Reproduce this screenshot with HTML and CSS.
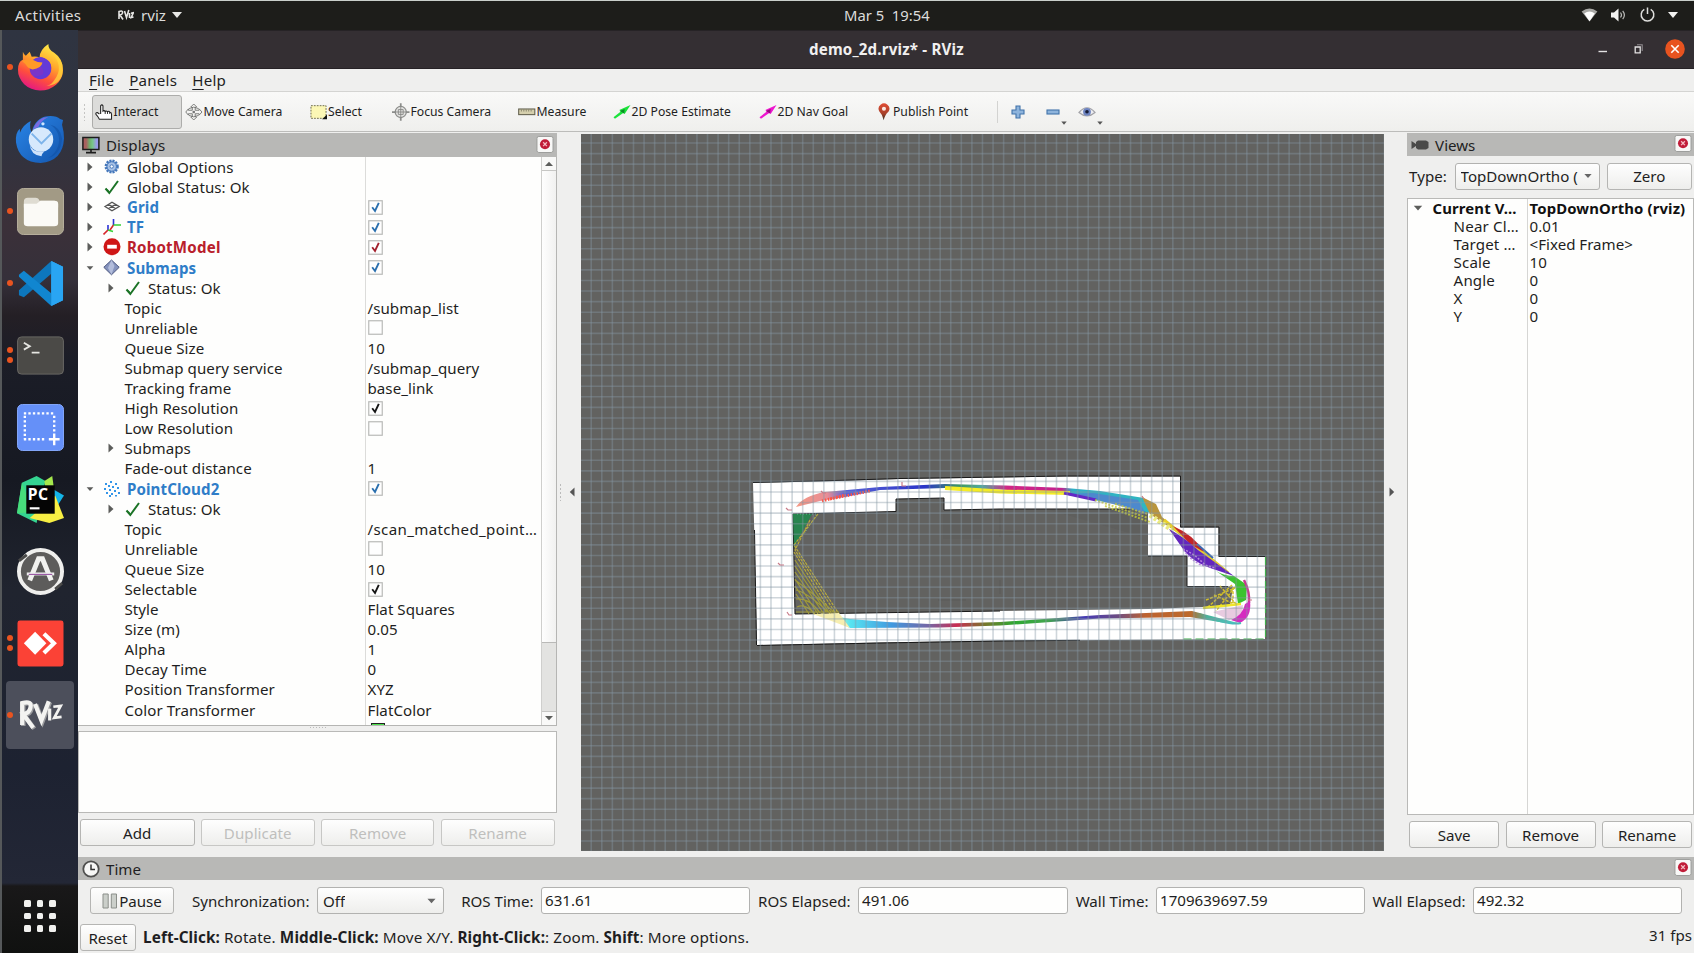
FILE: index.html
```html
<!DOCTYPE html>
<html lang="en">
<head>
<meta charset="utf-8">
<title>demo_2d.rviz* - RViz</title>
<link rel="stylesheet" href="styles.css">
</head>
<body>
<svg class="defs" width="0" height="0" aria-hidden="true">
  <defs>
    <symbol id="tri" viewBox="0 0 8 10"><path d="M1.500 .5v9l5-4.500z" fill="#5c5d5b"/></symbol>
    <symbol id="tri-down" viewBox="0 0 10 8"><path d="M.8 1.800h8.400L5 6.500z" fill="#5c5d5b"/></symbol>
    <symbol id="ok" viewBox="0 0 18 18"><path d="M2.500 10.500 6.300 15 15 3" fill="none" stroke="#1b7326" stroke-width="2"/><path d="M2.500 10 5.500 12l1 3.500z" fill="#1b7326"/></symbol>
    <symbol id="check" viewBox="0 0 15 15"><rect x=".75" y=".75" width="13.500" height="13.500" fill="#fefefe" stroke="#b9bab8" stroke-width="1.200"/></symbol>
    <symbol id="mark" viewBox="0 0 15 15"><path d="M4.200 7.300 7 11l3.800-8.200" fill="none" stroke="currentColor" stroke-width="1.900"/></symbol>
    <symbol id="close" viewBox="0 0 18 18"><rect x=".5" y=".5" width="17" height="17" rx="2" fill="#f8f8f7" stroke="#999a98"/><circle cx="9" cy="8.700" r="5.300" fill="#c01c38"/><path d="m7 6.700 4 4m0-4-4 4" stroke="#f3b8c0" stroke-width="1.400"/></symbol>
  </defs>
</svg>

<header class="topbar">
  <span class="activities">Activities</span>
  <svg class="rviz-mini" viewBox="0 0 16 12"><g fill="none" stroke="#e6e6e4" stroke-width="1.600"><path d="M1 10V2.500Q5 1 4.500 4 4.300 5.500 2 6l3 4.500M6.500 2l2 6.500L10.800 1M11.500 4v5M13 4.200l2.400-.6L13.200 8.500l2.300-.6"/></g></svg>
  <span class="app-name">rviz</span>
  <svg class="caret" viewBox="0 0 10 6"><path d="M0 0h10L5 6z" fill="#e8e8e6"/></svg>
  <span class="clock">Mar 5&nbsp; 19:54</span>
  <div class="sys">
    <svg width="17" height="14" viewBox="0 0 17 14"><path d="M.6 3.600Q8.500-2.700 16.400 3.600L8.500 13.600z" fill="#a9a9a6"/><path d="M3.200 5.400q5.300-4 10.600 0L8.500 13.300z" fill="#fff"/></svg>
    <svg width="16" height="14" viewBox="0 0 16 14"><path d="M0 4.500h3L7.500.5v13L3 9.500H0z" fill="#f2f2f0"/><path d="M9.500 4.500q2 2.500 0 5M11.700 2.800q3.400 4.200 0 8.400" fill="none" stroke="#b9b9b7" stroke-width="1.200"/></svg>
    <svg width="15" height="15" viewBox="0 0 15 15"><path d="M4.300 2.300a6.300 6.300 0 1 0 6.400 0M7.500 .5v6.500" fill="none" stroke="#dededc" stroke-width="1.500"/></svg>
    <svg width="10" height="6" viewBox="0 0 10 6"><path d="M0 0h10L5 6z" fill="#f2f2f0"/></svg>
  </div>
</header>

<div class="desktop">
<nav class="dock">
  <div class="slot"><i class="dots one"></i>
    <svg viewBox="0 0 48 48"><defs><linearGradient id="fx" x1=".75" y1="0" x2=".3" y2="1"><stop offset="0" stop-color="#fff14a"/><stop offset=".4" stop-color="#ffa62b"/><stop offset=".7" stop-color="#ff4f3c"/><stop offset="1" stop-color="#e31587"/></linearGradient></defs><path d="M6 8q1 3 3 4l4-4 2 5q5-1 8 1 0-8 9-14 0 6 6 9 9 6 9 18A23 21 0 0 1 1 26Q1 18 6 16z" fill="url(#fx)"/><circle cx="24" cy="25" r="11" fill="#7a35c9"/><path d="M15 17q9-8 18 1 4 5 0 13-8 8-15 2 12 0 8-8-3-5-11-8z" fill="#643ad8"/><path d="M5 17q8-3 11-1 5 3 10 3-1 6-10 7-5-1-7-5z" fill="#ff9a28"/><path d="M35 9q14 14 3 28-2 4-8 6 20-2 16-23-3-8-11-11z" fill="#ffd53c" opacity=".75"/></svg></div>
  <div class="slot">
    <svg viewBox="0 0 48 48"><defs><linearGradient id="tb" x1="0" y1="0" x2="1" y2="1"><stop offset="0" stop-color="#2a86e8"/><stop offset="1" stop-color="#1456ae"/></linearGradient></defs><path d="M16 13Q21 0 34 0q7 0 10 3l3 1-1 5q2 7 2 14-1 23-24 25Q2 47-1 27q-1-10 4-14l0 4Q6 9 14 5q-2 7 2 14z" fill="url(#tb)"/><path d="M16 14Q21 1 32 1q-8 4-10 10z" fill="#7a6be0"/><path d="M34 9q12 8 8 22-3 8-10 12 13-4 14-20-2-12-12-14z" fill="#0f4da0" opacity=".5"/><circle cx="24.500" cy="24" r="12.500" fill="#d7e9fc"/><path d="m15 18 10 10 10-10" fill="none" stroke="#7db4ea" stroke-width="2"/><path d="M13 29q3 9 15 7-3 3-3 5-11-1-12-12z" fill="#cfe2fa"/><circle cx="26.500" cy="8" r="1.700" fill="#cfe6ff"/></svg></div>
  <div class="slot"><i class="dots one"></i>
    <svg viewBox="0 0 48 48"><rect x=".5" y=".5" width="47" height="47" rx="6" fill="#a29a85" stroke="#b7b09d"/><path d="M7 14q0-4 4-4h8q3 0 4 3h15q4 0 4 3v4H7z" fill="#dfdcd2"/><path d="M7 16h13l4-3h14q4 0 4 3v20q0 3-4 3H11q-4 0-4-3z" fill="#fbfaf6"/></svg></div>
  <div class="slot"><i class="dots one"></i>
    <svg viewBox="0 0 48 48"><path d="M35 1 47 7v34L35 47z" fill="#29a5f3"/><path d="M35 1 2 31v5l5 2 28-24z" fill="#0d77bd"/><path d="m2 15 5-4 28 23v13L2 17z" fill="#1186d0"/><path d="M35 1 47 7v34L35 47z" fill="#29a5f3"/></svg></div>
  <div class="slot"><i class="dots one up"></i><i class="dots one down"></i>
    <svg viewBox="0 0 48 48"><rect x=".6" y="5" width="46.800" height="38" rx="4" fill="#4b4a47" stroke="#696864"/><path d="m7 11 6 3.500L7 18M15 21h8" fill="none" stroke="#e6e6e2" stroke-width="1.900"/></svg></div>
  <div class="slot">
    <svg viewBox="0 0 48 48"><rect x=".5" y=".5" width="47" height="47" rx="5" fill="#6590f8" stroke="#84a7fb"/><path d="M7 9.500h31M8 12v24M38 12v18M7 36h23" fill="none" stroke="#fff" stroke-width="2.400" stroke-dasharray="2.400 2.200"/><path d="M38 30v12M32.500 36h11" stroke="#fff" stroke-width="2.400"/></svg></div>
  <div class="slot">
    <svg viewBox="0 0 48 48"><path d="M5 7 20 0 29 5 20 48 0 38z" fill="#35d491"/><path d="m0 38 5-31 12 30z" fill="#47dd7b"/><path d="M28 5l8-5 2 15-8 6z" fill="#a5e84d"/><path d="M36 13 48 20 41 31z" fill="#14b5e8"/><path d="M39 20 48 43 33 48 13 43z" fill="#f8ef43"/><rect x="9.500" y="9.500" width="29" height="29" fill="#050505"/><path d="M13 33h10" stroke="#fff" stroke-width="2.200"/><text x="11" y="24" class="pc">PC</text></svg></div>
  <div class="slot">
    <svg viewBox="0 0 48 48"><circle cx="24" cy="24" r="22" fill="#5d5c5b" stroke="#efefed" stroke-width="4"/><path d="m2 13 8-6M39 42l7-6" stroke="#4a4a49" stroke-width="3"/><path d="M13 33 22 11h4l9 22" fill="none" stroke="#f1f1ef" stroke-width="5"/><path d="M10 26.500h28" stroke="#eee" stroke-width="3"/><path d="M12 27h24" stroke="#9b5aa5" stroke-width="1.200"/></svg></div>
  <div class="slot"><i class="dots one up"></i><i class="dots one down"></i>
    <svg viewBox="0 0 48 48"><rect x=".5" y=".5" width="47" height="47" rx="2.500" fill="#fb4236"/><path d="M18.500 12 30 23.800 18.500 35.500 7 23.800z" fill="#fff"/><path d="m27.500 14 10.200 9.800-10.200 9.800" fill="none" stroke="#fff" stroke-width="4.300"/></svg></div>
  <div class="slot active"><i class="dots one"></i>
    <svg viewBox="0 0 48 48"><g fill="none" stroke="#9a9b9e" stroke-width="5" transform="translate(1.200 1)"><path d="M4 35V11q11-3 9 5-1 6-8 7l11 15M18 12l7 18 8-21"/></g><g fill="none" stroke="#f3f3f1" stroke-width="4.600"><path d="M4 35V11q11-3 9 5-1 6-8 7l11 15M18 12l7 18 8-21"/><path d="M34 17v13" stroke-width="3.500"/><path d="m38 15 8-1-7 13 8-1" stroke-width="3"/></g></svg></div>
  <div class="apps"><i></i><i></i><i></i><i></i><i></i><i></i><i></i><i></i><i></i></div>
</nav>

<main class="window">
  <div class="titlebar"><b class="title">demo_2d.rviz* - RViz</b>
    <div class="winbtns">
      <svg width="10" height="14" viewBox="0 0 10 14"><path d="M.5 9.500h8.500" stroke="#e3e2e3" stroke-width="1.400"/></svg>
      <svg class="restore" width="10" height="12" viewBox="0 0 10 12"><path d="M1.200 4h5v5.800h-5z" fill="none" stroke="#e3e2e3" stroke-width="1.300"/><path d="M3 1.700h5.200V8" fill="none" stroke="#8f8b8f" stroke-width="1.100"/></svg>
      <svg width="20" height="20" viewBox="0 0 20 20"><circle cx="10" cy="10" r="9.800" fill="#e8531f"/><path d="m6.300 6.300 7.400 7.400m0-7.400-7.400 7.400" stroke="#fff" stroke-width="1.600"/></svg>
    </div>
  </div>
  <div class="menubar"><span><u>F</u>ile</span><span><u>P</u>anels</span><span><u>H</u>elp</span></div>
  <div class="toolbar">
    <i class="grip"></i>
    <div class="tool t-interact"><svg viewBox="0 0 18 18"><path d="M5.800 11V2.600q1.300-1.800 2.400 0V8q1-1 2.300.3 1-1 2.300.4 1.500-1 2.500.5 1.500 0 1.700 2v5.300H4.500Q3 13.500 1 11.500.3 9.500 2.500 9.600L4.500 11" fill="#fff" stroke="#222" stroke-width="1.100"/><path d="M10.500 8v3M12.900 8.500v2.500M15.200 9v2" stroke="#222"/></svg><span>Interact</span></div>
    <div class="tool t-move"><svg viewBox="0 0 18 18"><path d="M9 .8l3 3-1.500.4v3h4V5.800l3 3.200-3 3.200v-1.400h-4v3l1.500.4-3 3-3-3 1.500-.4v-3h-4v1.400L.8 9l2.700-3.200v1.400h4v-3L6 3.800zM4 5.500q5-3 10 0M4 12.500q5 3 10 0" fill="none" stroke="#6d6e6c" stroke-width=".9"/><path d="M7.800 7.800h2.400v2.400H7.800z" fill="#777"/></svg><span>Move Camera</span></div>
    <div class="tool t-select"><svg viewBox="0 0 18 18"><rect x="1" y="2.500" width="15.500" height="13" fill="#fbf7b5" stroke="#6c6a4c" stroke-dasharray="1.800 1.200"/><path d="M17.500 11.500v5h-5z" fill="#111"/></svg><span>Select</span></div>
    <div class="tool t-focus"><svg viewBox="0 0 18 18"><path d="M9 0v18M0 9h18" stroke="#8c8d8b" stroke-width="1.800"/><circle cx="9" cy="9" r="5.700" fill="#e4e4e2" stroke="#8c8d8b" stroke-width="1.300"/><path d="M9 3v12M3 9h12M6.500 6.500h5v5h-5z" stroke="#858684" fill="none" stroke-width=".9"/></svg><span>Focus Camera</span></div>
    <div class="tool t-measure"><svg viewBox="0 0 18 18"><rect x=".7" y="5.900" width="16.600" height="5.800" fill="#d5cfad" stroke="#62604f" stroke-width="1.100"/><path d="M3.500 6.500v2m2.500-2v2m2.500-2v2m2.500-2v2m2.500-2v2" stroke="#77745e" stroke-width=".8"/></svg><span>Measure</span></div>
    <div class="tool t-pose"><svg viewBox="0 0 18 18"><path d="M.5 14.500 8 8.500 6.500 7 18 1.800 12 11l-1.500-1L2 16z" fill="#1be33b"/><path d="m7 8 4.500 2.500L12 6z" fill="#0a8d24"/></svg><span>2D Pose Estimate</span></div>
    <div class="tool t-nav"><svg viewBox="0 0 18 18"><path d="M.5 14.500 8 8.500 6.500 7 18 1.800 12 11l-1.500-1L2 16z" fill="#ee17cf"/><path d="m7 8 4.500 2.500L12 6z" fill="#97097f"/></svg><span>2D Nav Goal</span></div>
    <div class="tool t-publish"><svg viewBox="0 0 18 18"><defs><linearGradient id="pin" x2="0" y2="1"><stop offset="0" stop-color="#e04c34"/><stop offset=".6" stop-color="#a8412a"/><stop offset="1" stop-color="#323020"/></linearGradient></defs><path d="M9 17.500Q8 12 4.500 8.500A5.500 5.500 0 1 1 14 8.500Q10 12 9 17.500z" fill="url(#pin)"/><circle cx="9.200" cy="5.600" r="2.100" fill="#fbe9e3"/></svg><span>Publish Point</span></div>
    <i class="sep"></i>
    <svg class="ic plus" viewBox="0 0 14 14"><path d="M5 1h4v4h4v4H9v4H5V9H1V5h4z" fill="#8eb4dc" stroke="#4173aa" stroke-width="1.100"/></svg>
    <svg class="ic minus" viewBox="0 0 14 14"><rect x="1" y="5" width="12" height="4" fill="#8eb4dc" stroke="#4173aa" stroke-width="1.100"/></svg>
    <svg class="dd" viewBox="0 0 6 4"><path d="M.3.500h5.400L3 3.700z" fill="#555"/></svg>
    <svg class="ic eye" viewBox="0 0 18 14"><path d="M1 7.500Q9-2 17 7.500 9 14.500 1 7.500z" fill="#ececf0" stroke="#a3a3a8" stroke-width="1.200"/><circle cx="9" cy="6.800" r="3.900" fill="#6c83c0"/><circle cx="9" cy="6.800" r="1.800" fill="#171c35"/></svg>
    <svg class="dd" viewBox="0 0 6 4"><path d="M.3.500h5.400L3 3.700z" fill="#555"/></svg>
  </div>

  <div class="work">
    <section class="displays">
      <div class="panel-head"><svg width="18" height="18" viewBox="0 0 18 18"><defs><linearGradient id="mon"><stop offset=".2" stop-color="#a9605f"/><stop offset=".42" stop-color="#6fae6d"/><stop offset=".6" stop-color="#78c58a"/><stop offset=".85" stop-color="#9a9be8"/></linearGradient></defs><rect x=".9" y="1.500" width="16" height="12" fill="url(#mon)" stroke="#1d1d1d" stroke-width="1.500"/><path d="M9 13.500V16M4 16.600h10" stroke="#1d1d1d" stroke-width="1.600"/></svg><span>Displays</span><svg class="x" width="18" height="17"><use href="#close"/></svg></div>
      <div class="tree">
        <div class="rows">
          <div class="row"><div class="n"><svg class="ar"><use href="#tri"/></svg><svg class="ic" viewBox="0 0 18 18"><circle cx="8.700" cy="8.500" r="5.900" fill="#a8c2e6" stroke="#4376ba" stroke-width="2.400" stroke-dasharray="2 1.100"/><circle cx="8.700" cy="8.500" r="4.700" fill="none" stroke="#4a7bbd"/><circle cx="8.700" cy="8.500" r="1.700" fill="#fff" stroke="#4a7bbd"/></svg><span>Global Options</span></div></div>
          <div class="row"><div class="n"><svg class="ar"><use href="#tri"/></svg><svg class="ic"><use href="#ok"/></svg><span>Global Status: Ok</span></div></div>
          <div class="row"><div class="n blue"><svg class="ar"><use href="#tri"/></svg><svg class="ic" viewBox="0 0 18 18"><path d="M2 8.500 9 4.200l7.200 4.300L9 12.800zM5.500 6.300l7.300 4.400M12.600 6.300 5.300 10.700" fill="none" stroke="#555" stroke-width="1.300"/></svg><span>Grid</span></div><div class="v"><svg class="cb c-blue"><use href="#check"/><use href="#mark"/></svg></div></div>
          <div class="row"><div class="n blue"><svg class="ar"><use href="#tri"/></svg><svg class="ic" viewBox="0 0 18 18"><g fill="none" stroke-width="1.600"><path d="M5 12V7M10.500 7V1" stroke="#2b32d8"/><path d="m5 12-4.500 4.500M10.500 7 7 12" stroke="#d8262b"/><path d="m5 12 5 1.500M10.500 7H18" stroke="#36d136"/></g></svg><span>TF</span></div><div class="v"><svg class="cb c-blue"><use href="#check"/><use href="#mark"/></svg></div></div>
          <div class="row"><div class="n red"><svg class="ar"><use href="#tri"/></svg><svg class="ic" viewBox="0 0 18 18"><circle cx="9" cy="8.800" r="8.500" fill="#cf1616"/><rect x="4.200" y="6.800" width="9.600" height="3.800" fill="#fff"/></svg><span>RobotModel</span></div><div class="v"><svg class="cb c-red"><use href="#check"/><use href="#mark"/></svg></div></div>
          <div class="row"><div class="n blue"><svg class="ar"><use href="#tri-down"/></svg><svg class="ic" viewBox="0 0 18 18"><path d="M8.500 1 16.200 8.300 8.500 15.800.8 8.300z" fill="#8593bd" stroke="#4d587f"/><path d="m8.500 1 3 6-3 8.500L5 9z" fill="#b3bddb"/></svg><span>Submaps</span></div><div class="v"><svg class="cb c-blue"><use href="#check"/><use href="#mark"/></svg></div></div>
          <div class="row"><div class="n l2"><svg class="ar"><use href="#tri"/></svg><svg class="ic"><use href="#ok"/></svg><span>Status: Ok</span></div></div>
          <div class="row"><div class="n leaf">Topic</div><div class="v">/submap_list</div></div>
          <div class="row"><div class="n leaf">Unreliable</div><div class="v"><svg class="cb"><use href="#check"/></svg></div></div>
          <div class="row"><div class="n leaf">Queue Size</div><div class="v">10</div></div>
          <div class="row"><div class="n leaf">Submap query service</div><div class="v">/submap_query</div></div>
          <div class="row"><div class="n leaf">Tracking frame</div><div class="v">base_link</div></div>
          <div class="row"><div class="n leaf">High Resolution</div><div class="v"><svg class="cb"><use href="#check"/><use href="#mark"/></svg></div></div>
          <div class="row"><div class="n leaf">Low Resolution</div><div class="v"><svg class="cb"><use href="#check"/></svg></div></div>
          <div class="row"><div class="n l2 noicon"><svg class="ar"><use href="#tri"/></svg><span>Submaps</span></div></div>
          <div class="row"><div class="n leaf">Fade-out distance</div><div class="v">1</div></div>
          <div class="row"><div class="n blue"><svg class="ar"><use href="#tri-down"/></svg><svg class="ic" viewBox="0 0 18 18"><path d="M7 1h2v2H7zM2 3h2v2H2zM12 3h2v2h-2zM5 5h2v2H5zM9 6h2v2H9zM1 8h2v2H1zM14 7h2v2h-2zM6 9h2v2H6zM11 10h2v2h-2zM3 12h2v2H3zM15 12h2v2h-2zM8 13h2v2H8zM6 15h2v2H6zM12 15h2v1.500h-2z" fill="#3395e8"/></svg><span>PointCloud2</span></div><div class="v"><svg class="cb c-blue"><use href="#check"/><use href="#mark"/></svg></div></div>
          <div class="row"><div class="n l2"><svg class="ar"><use href="#tri"/></svg><svg class="ic"><use href="#ok"/></svg><span>Status: Ok</span></div></div>
          <div class="row"><div class="n leaf">Topic</div><div class="v wide">/scan_matched_point…</div></div>
          <div class="row"><div class="n leaf">Unreliable</div><div class="v"><svg class="cb"><use href="#check"/></svg></div></div>
          <div class="row"><div class="n leaf">Queue Size</div><div class="v">10</div></div>
          <div class="row"><div class="n leaf">Selectable</div><div class="v"><svg class="cb"><use href="#check"/><use href="#mark"/></svg></div></div>
          <div class="row"><div class="n leaf">Style</div><div class="v">Flat Squares</div></div>
          <div class="row"><div class="n leaf">Size (m)</div><div class="v">0.05</div></div>
          <div class="row"><div class="n leaf">Alpha</div><div class="v">1</div></div>
          <div class="row"><div class="n leaf">Decay Time</div><div class="v">0</div></div>
          <div class="row"><div class="n leaf">Position Transformer</div><div class="v">XYZ</div></div>
          <div class="row"><div class="n leaf">Color Transformer</div><div class="v">FlatColor</div></div>
          <div class="row"><div class="n leaf">Color</div><div class="v"><i class="swatch"></i></div></div>
        </div>
        <div class="scroll"><i class="sb"><svg width="10" height="6" viewBox="0 0 10 6"><path d="M1 5h8L5 .8z" fill="#5c5d5b"/></svg></i><i class="thumb"></i><i class="track"></i><i class="sb"><svg width="10" height="6" viewBox="0 0 10 6"><path d="M1 1h8L5 5.200z" fill="#5c5d5b"/></svg></i></div>
      </div>
      <i class="hgrip"></i>
      <div class="desc"></div>
      <div class="btns four"><span class="btn">Add</span><span class="btn off">Duplicate</span><span class="btn off">Remove</span><span class="btn off">Rename</span></div>
    </section>
    <div class="gutter left"><i class="vgrip"></i><svg width="6" height="10" viewBox="0 0 6 10"><path d="M5.500.500v9L.8 5z" fill="#555"/></svg></div>
    <svg class="view3d" viewBox="581 134 803 717">
      <defs>
        <linearGradient id="top1" gradientUnits="userSpaceOnUse" x1="795" x2="1155" y1="0" y2="0"><stop offset="0" stop-color="#f59a85"/><stop offset=".09" stop-color="#e88d96"/><stop offset=".14" stop-color="#5862d8"/><stop offset=".36" stop-color="#2b35c8"/><stop offset=".46" stop-color="#3d9a60"/><stop offset=".52" stop-color="#55a8a0"/><stop offset=".59" stop-color="#d22686"/><stop offset=".74" stop-color="#c4208f"/><stop offset=".77" stop-color="#2fb0c5"/><stop offset="1" stop-color="#30b6c0"/></linearGradient>
        <linearGradient id="bot1" gradientUnits="userSpaceOnUse" x1="830" x2="1240" y1="0" y2="0"><stop offset="0" stop-color="#fbf6a5"/><stop offset=".05" stop-color="#57e4f1"/><stop offset=".15" stop-color="#419ae0"/><stop offset=".24" stop-color="#7465a5"/><stop offset=".31" stop-color="#c92d52"/><stop offset=".38" stop-color="#75792c"/><stop offset=".45" stop-color="#2da832"/><stop offset=".53" stop-color="#42a64d"/><stop offset=".62" stop-color="#453ab5"/><stop offset=".7" stop-color="#6b4c84"/><stop offset=".77" stop-color="#bd6330"/><stop offset=".88" stop-color="#bd6a2c"/><stop offset=".92" stop-color="#4ab39c"/><stop offset="1" stop-color="#4fc5c4"/></linearGradient>
      </defs>
      <rect x="581" y="134" width="803" height="717" fill="#626260"/>
      <path fill="#fff" fill-rule="evenodd" d="M753 483 835 481 900 479 1000 477.500 1065 476.500H1180V527.500H1218.500V557H1265V639L1000 640.500 880 642.500 757 645 755 560zM793 514 896 511.500V499L944 498V510L1000 509H1148V556H1187V586.500H1233L1230 606 1148 609 1000 611 795 614z"/>
      <g fill="none" stroke="#191919" stroke-width="1"><path d="M753 482.500 835 480.500 900 478.500 1000 477 1065 476H1180.500V527H1219V556.500H1265"/><path d="M793 514 896 511.500V499L944 498V510L1000 509H1138M1148 556H1187V586.500H1228M795 614 793 514M754.500 530 756.500 645 M795 614 1000 611"/><path d="M757 645.500 880 643 1000 641 1080 640.300"/></g>
      <path d="M1265.500 557v82h-82" fill="none" stroke="#3fae4a" stroke-width="1.200" stroke-dasharray="8 4"/>
      <path d="M943 513h40v26h-40zM1050 510h90v26z" fill="#555" opacity=".18"/>
      <g stroke="#555" stroke-width=".7" opacity=".6"><path d="M938 600h28M1000 512v25M1000 580v14M990 532h30"/></g>
      <path fill="url(#top1)" d="M796 507Q803 496 825 492L880 487 945 484 1005 485.500 1066 488 1100 491 1144 498 1150 513 1120 505 1066 494.500 1000 489.500 945 488 880 490 845 497 820 501z"/>
      <path d="M945 488 1000 491.500 1070 493" fill="none" stroke="#f5ec24" stroke-width="4"/>
      <path d="M1066 494q38 6 80 20l-8-14-45-7z" fill="#557ed0" opacity=".8"/>
      <path d="M1064 493 1096 500" stroke="#6428c5" stroke-width="3"/>
      <path d="M822 501 845 495M830 499 870 491" stroke="#ff5544" stroke-width="3" stroke-dasharray="1.500 1.500"/>
      <path d="M1095 500 1148 518M1105 506 1150 522M1115 504 1148 514" stroke="#c7cd37" stroke-width="2" stroke-dasharray="2 1.500" opacity=".8"/>
      <path d="M1142 497 1156 504 1162 517 1190 541 1172 529 1150 514z" fill="#b9953c"/>
      <path d="M1164 520 1228 573" stroke="#e8d02a" stroke-width="3.500"/>
      <path d="M1150 515 1172 530" stroke="#ebea80" stroke-width="5" stroke-dasharray="3 2"/>
      <path d="M1173 526Q1194 535 1204 552L1190 544z" fill="#c32527"/>
      <path d="m1197 544 16 14" stroke="#3a67b0" stroke-width="2"/>
      <path d="M1169 529Q1184 537 1198 550L1234 576 1216 570Q1193 563 1183 549z" fill="#6326bd"/>
      <path d="M1183 549q12 5 22 16l10 3-14-3q-12-6-18-16" stroke="#b583df" stroke-width="1.500" fill="none" stroke-dasharray="2 1.500"/>
      <path d="M1216 571Q1224 576 1234 576L1247 585 1246 600 1238 604 1235 584Z" fill="#3bc32e"/>
      <path d="M1244 580q6 12 5 23" fill="none" stroke="#c83a8e" stroke-width="2.500"/>
      <path d="M1232 585 1207 608M1235 587l-19 24M1233 587v17M1220 586l16 18M1214 595l20 9M1206 600l29-12" stroke="#d3bf27" stroke-width="1.500" stroke-dasharray="3 1.300"/>
      <path d="M1203 608 1241 604" stroke="#f0e628" stroke-width="2.500"/>
      <path d="M1213 612 1243 605 1242 615 1229 620z" fill="#e8cbe0"/>
      <path d="M1250 601Q1252 617 1240 623L1231 620Q1243 615 1245 604z" fill="#d52bc0"/>
      <path d="M1199 614Q1230 626 1241 623" fill="none" stroke="#4abcbc" stroke-width="2"/>
      <path fill="url(#bot1)" d="M820 613 850 619Q890 623 930 624L1000 622 1100 615 1192 611 1238 623 1225 623 1190 617 1100 618.500 1000 625.500 940 627.500 850 628z"/>
      <path d="M793 514h19l-12 22-6 12z" fill="#29844f"/>
      <path d="M797 514h20l-13 20" fill="none" stroke="#74dcab" opacity=".7" stroke-dasharray="1 2"/>
      <path d="M818 514 794 545 839 614M810 520 795 550 836 614M794 552 832 614" fill="none" stroke="#bdae38" stroke-width="1.100" stroke-dasharray="3 1"/>
      <path d="M795 560 830 614M795 566 826 612M795 572 824 614M795 579 818 614M795 586 814 614M796 594 809 614M795 580q14 10 41 34M796 590q12 3 32 22M796 599q14-1 24 14M797 607q8-4 18 7M796 612h43" fill="none" stroke="#a09a37" stroke-width="1.200"/>
      <path d="M813 614 850 628 839 613z" fill="#f6eeb0"/>
      <g stroke="#8698a6" stroke-opacity=".4" stroke-dasharray="1.600 8.975"><path d="M590.400 492.500H1384" stroke-width="717"/><path d="M982.500 142.200V851" stroke-width="803"/></g>
      <g fill="none" stroke="#c87b88" stroke-width="1.200"><path d="M786 508l2 2h4M778 563l2 2h4M787 612l2 3h3M902 482v4h4M821 491l2 2h3M1142 496l2 3M1248 600h4"/></g>
    </svg>
    <div class="gutter right"><svg width="6" height="10" viewBox="0 0 6 10"><path d="M.5.500v9L5.200 5z" fill="#555"/></svg></div>
    <section class="views">
      <div class="panel-head"><svg width="18" height="12" viewBox="0 0 18 12"><path d="M.5 2 5 5V3l2-1.500h8L17.500 3v6L15 10.500H7L5 9V7L.5 10z" fill="#4a4a49"/></svg><span>Views</span><svg class="x" width="18" height="17"><use href="#close"/></svg></div>
      <div class="typerow"><label>Type:</label><span class="combo"><em>TopDownOrtho (</em><svg width="8" height="6" viewBox="0 0 10 6"><path d="M.5.500h9L5 5.500z" fill="#666"/></svg></span><span class="btn">Zero</span></div>
      <div class="vtree">
        <div class="vrow b"><div class="vn"><svg class="ar"><use href="#tri-down"/></svg><span>Current V…</span></div><div class="vv">TopDownOrtho (rviz)</div></div>
        <div class="vrow"><div class="vn leaf">Near Cl…</div><div class="vv">0.01</div></div>
        <div class="vrow"><div class="vn leaf">Target …</div><div class="vv">&lt;Fixed Frame&gt;</div></div>
        <div class="vrow"><div class="vn leaf">Scale</div><div class="vv">10</div></div>
        <div class="vrow"><div class="vn leaf">Angle</div><div class="vv">0</div></div>
        <div class="vrow"><div class="vn leaf">X</div><div class="vv">0</div></div>
        <div class="vrow"><div class="vn leaf">Y</div><div class="vv">0</div></div>
      </div>
      <div class="btns three"><span class="btn">Save</span><span class="btn">Remove</span><span class="btn">Rename</span></div>
    </section>
  </div>

  <section class="time">
    <div class="panel-head"><svg width="18" height="18" viewBox="0 0 18 18"><circle cx="9" cy="9" r="7.700" fill="#f7f7f6" stroke="#4f4f4e" stroke-width="1.800"/><path d="M9 4.500V9.500h4" fill="none" stroke="#333" stroke-width="1.500"/></svg><span>Time</span><svg class="x" width="18" height="17"><use href="#close"/></svg></div>
    <div class="timerow">
      <span class="btn pause"><svg width="16" height="16" viewBox="0 0 16 16"><path d="M1 1h5.200v14H1zM9.300 1h5.200v14H9.300z" fill="#cbcfca" stroke="#8b8f8a"/></svg>Pause</span>
      <label class="sync">Synchronization:</label><span class="combo"><em>Off</em><svg width="9" height="6" viewBox="0 0 10 6"><path d="M.5.500h9L5 5.500z" fill="#666"/></svg></span>
      <label>ROS Time:</label><span class="field">631.61</span>
      <label>ROS Elapsed:</label><span class="field">491.06</span>
      <label>Wall Time:</label><span class="field">1709639697.59</span>
      <label>Wall Elapsed:</label><span class="field">492.32</span>
    </div>
  </section>
  <footer class="status"><span class="btn">Reset</span><p><b>Left-Click:</b> Rotate. <b>Middle-Click:</b> Move X/Y. <b>Right-Click:</b>: Zoom. <b>Shift</b>: More options.</p><span class="fps">31 fps</span></footer>
</main>
</div>
</body>
</html>
```
FILE: styles.css
```css
* { box-sizing: border-box; }
body { margin: 0; width: 1694px; height: 953px; overflow: hidden; background: #efefee; color: #1e1e22; font: 15.1px/20px "Noto Sans", "Open Sans", sans-serif; }
.defs { position: absolute; }
svg { display: block; flex: none; }
i { display: block; flex: none; }

.topbar { height: 30px; background: #1d1d1a; border-top: 1px solid #c9cfcb; color: #dcdcda; display: flex; align-items: center; padding: 0 16px 2px 15px; position: relative; }
.activities { width: 103px; letter-spacing: .35px; }
.rviz-mini { width: 16px; height: 12px; margin-right: 7px; }
.caret { width: 10px; height: 6px; margin-left: 6px; }
.clock { position: absolute; left: 844px; white-space: pre; letter-spacing: 0; font-size: 14.8px; }
.sys { margin-left: auto; display: flex; align-items: center; gap: 13px; }

.desktop { display: flex; height: 923px; }
.dock { width: 78px; flex: none; border-left: 2px solid #55585a; padding-top: 1px; background: linear-gradient(#2f3441 0, #30333f 110px, #3b3039 195px, #35303a 250px, #241f25 285px, #1b1d27 330px, #161922 450px, #20242f 560px, #1d2231 740px, #232736 853px, #191819 856px, #101110 923px); }
.slot { height: 72px; position: relative; display: flex; align-items: center; justify-content: center; }
.slot > svg { width: 47px; height: 47px; overflow: visible; }
.slot.active::before { content: ""; position: absolute; left: 4px; top: 2px; width: 68px; height: 68px; border-radius: 4px; background: #4c4f5b; }
.slot.active > * { z-index: 1; }
.slot.active > svg { height: 44px; }
.dots { position: absolute; left: 4.500px; top: 33px; width: 6px; height: 6px; border-radius: 50%; background: #e95420; }
.dots.up { top: 28px; }
.dots.down { top: 38px; }
.pc { font: bold 16px "Noto Sans", sans-serif; fill: #fff; letter-spacing: .5px; }
.apps { display: grid; grid-template-columns: repeat(3, 6.500px); gap: 6px; margin: 149px 0 0 22px; }
.apps i { height: 6.500px; border-radius: 1.500px; background: #f1f1ef; }

.window { flex: 1; min-width: 0; display: flex; flex-direction: column; }
.titlebar { height: 39px; background: #342f33; border-bottom: 1px solid #262226; border-top: 1px solid #262326; color: #f1f0f0; display: flex; align-items: center; position: relative; }
.title { margin-left: 731px; margin-top: -1px; letter-spacing: .18px; }
.winbtns { margin-left: auto; display: flex; align-items: center; gap: 26px; padding-right: 9px; margin-top: -1px; }
.restore { margin-right: -5px; }
.menubar { height: 23px; display: flex; align-items: center; gap: 15px; padding: 0 0 1px 11px; border-bottom: 1px solid #d4d4d2; letter-spacing: .25px; }
.menubar u { text-underline-offset: 3px; }
.toolbar { height: 40px; background: linear-gradient(#f9f9f8, #efefed); border-bottom: 1px solid #bcbcba; display: flex; align-items: center; font-size: 12.200px; padding-left: 5px; }
.grip { width: 4px; height: 18px; margin-right: 5px; background: radial-gradient(circle, #c5c5c3 .8px, transparent 1px) 0 0/3px 4px; }
.tool { display: flex; align-items: center; gap: 1px; height: 34px; padding-left: 3px; white-space: nowrap; flex: none; }
.tool span { padding-top: 1px; }
.tool svg { width: 17.500px; height: 18px; }
.t-interact { width: 90px; margin-right: 0; background: #dcdcda; border: 1px solid #adadab; border-radius: 3px; padding-left: 2px; }
.t-move { width: 124.500px; }
.t-select { width: 82.500px; }
.t-focus { width: 126px; }
.t-measure { width: 95px; }
.t-pose { width: 146px; }
.t-nav { width: 115.500px; }
.t-publish { width: 125.500px; }
.sep { width: 1px; height: 22px; background: #d3d3d1; margin-right: 13px; }
.ic.plus, .ic.minus { width: 14px; height: 14px; }
.ic.plus { margin-right: 21px; }
.dd { width: 6px; height: 4px; margin: 22px 11px 0 1px; }
.ic.eye { width: 18px; height: 14px; }

.work { height: 725px; display: flex; padding-top: 1px; }
.panel-head { height: 24px; background: #b8b8b6; display: flex; align-items: center; gap: 6px; padding: 0 3px 0 4px; }
.panel-head .x { margin: -2px 0 0 auto; }
.displays { width: 479px; flex: none; display: flex; flex-direction: column; letter-spacing: .06px; }
.tree { height: 568.500px; background: #fefefd; border-bottom: 1px solid #b5b5b3; border-right: 1px solid #b5b5b3; display: flex; overflow: hidden; }
.rows { width: 464px; background: linear-gradient(90deg, transparent 287px, #dcdcda 287px, #dcdcda 288px, transparent 288px); }
.row { height: 20.100px; display: flex; white-space: nowrap; }
.n { width: 289.500px; flex: none; display: flex; align-items: center; padding-left: 8px; }
.n .ar { width: 8px; height: 10px; margin-right: 8.500px; }
.n .ic { width: 18px; height: 18px; margin-right: 6.500px; }
.n.leaf { padding-left: 46.500px; }
.n.l2 { padding-left: 29px; }
.n.noicon .ar { margin-right: 9.500px; }
.v { display: flex; align-items: center; }
.v.wide { letter-spacing: .35px; }
.blue { color: #2f7dc8; font-weight: bold; letter-spacing: .1px; }
.red { color: #b9202c; font-weight: bold; letter-spacing: .2px; }
.cb { width: 15px; height: 15px; color: #161616; }
.c-blue { color: #2a6fae; }
.c-red { color: #a3202c; }
.swatch { width: 14px; height: 14px; margin-left: 3px; background: #4be04b; border: 1px solid #222; }
.scroll { width: 15px; border-left: 1px solid #cfcfcd; display: flex; flex-direction: column; }
.sb { height: 14px; display: flex; align-items: center; justify-content: center; background: #f9f9f8; border-bottom: 1px solid #c6c6c4; }
.sb:last-child { border-bottom: 0; border-top: 1px solid #c6c6c4; }
.thumb { height: 472px; background: linear-gradient(90deg, #fefefe, #f1f1f0); border-bottom: 1px solid #b9b9b7; }
.track { flex: 1; background: #e3e3e1; }
.hgrip { height: 5px; width: 18px; margin: 0 auto; background: radial-gradient(circle, #bbb .7px, transparent 1px) 0 0/3px 3px repeat-x; }
.desc { height: 82px; background: #fefefd; border: 1px solid #b9b9b7; }
.btns { display: grid; }
.btn { display: flex; align-items: center; justify-content: center; height: 27px; border: 1px solid #b5b5b3; border-radius: 3px; background: linear-gradient(#fefefe, #eeeeec); }
.off { color: #bfbfbd; border-color: #c7c7c5; }
.four { grid-template-columns: 114.500px 114px 113.500px 114px; gap: 6.200px; padding: 6.500px 0 0 2px; }
.gutter { display: flex; align-items: center; flex: none; height: 717px; }
.gutter.left { width: 23.600px; padding-left: 2px; }
.gutter.right { width: 23.500px; padding-left: 5.500px; }
.vgrip { width: 3px; height: 18px; margin-right: 7px; background: radial-gradient(circle, #bbb .7px, transparent 1px) 0 0/3px 4px; }
.view3d { width: 803px; height: 717px; margin-top: .5px; }
.views { flex: 1; display: flex; flex-direction: column; }
.views .panel-head { height: 23px; padding-right: 2.500px; }
.typerow { display: flex; align-items: center; height: 42px; padding: 0 2px 2px; white-space: nowrap; }
.typerow label { width: 45.500px; }
.typerow .combo { width: 145.500px; margin-right: 6.500px; }
.typerow .btn { flex: 1; }
.combo { display: flex; align-items: center; justify-content: space-between; height: 27px; padding: 0 7px 0 5px; border: 1px solid #b2b2b0; border-radius: 3px; background: linear-gradient(#fefefe, #eeeeec); overflow: hidden; white-space: nowrap; }
.combo em { font-style: normal; overflow: hidden; }
.typerow em { width: 118px; }
.vtree { height: 617px; background: linear-gradient(90deg, transparent 119px, #d6d6d4 119px, #d6d6d4 120px, #fefefd 120px), #fefefd; border: 1px solid #b9b9b7; white-space: nowrap; overflow: hidden; }
.vrow { height: 18px; line-height: 18px; display: flex; }
.vn { width: 121.500px; flex: none; display: flex; align-items: center; padding-left: 5px; }
.vn .ar { width: 10px; height: 8px; margin-right: 9.500px; }
.vn.leaf { padding-left: 45.500px; letter-spacing: .15px; }
.vrow.b { font-weight: bold; font-size: 14.900px; letter-spacing: .12px; color: #111; }
.three { grid-template-columns: repeat(3, 90px); gap: 6.500px; padding: 6px 0 0 2px; }

.time .panel-head { height: 23px; padding-right: 2.500px; }
.timerow { display: grid; grid-template-columns: 84px 17.500px 125.500px 126.500px 97.500px 209px 108px 209.500px 88.500px 208.500px 108.500px 209px; padding: 7px 0 0 12px; align-items: center; white-space: nowrap; }
.timerow > label { text-align: right; padding-right: 7.500px; }
.timerow > .sync { grid-column: 2 / 4; }
.pause { gap: 1px; }
.field { height: 27px; line-height: 25px; border: 1px solid #b2b2b0; border-radius: 3px; background: #fefefd; padding-left: 3px; }
.status { display: flex; align-items: center; padding: 10px 2px 0 2px; }
.status .btn { width: 56px; margin-right: 7px; }
.status p { margin: -1px 0 0; font-size: 15.3px; letter-spacing: .1px; }
.fps { margin-left: auto; margin-top: -6px; }
```
